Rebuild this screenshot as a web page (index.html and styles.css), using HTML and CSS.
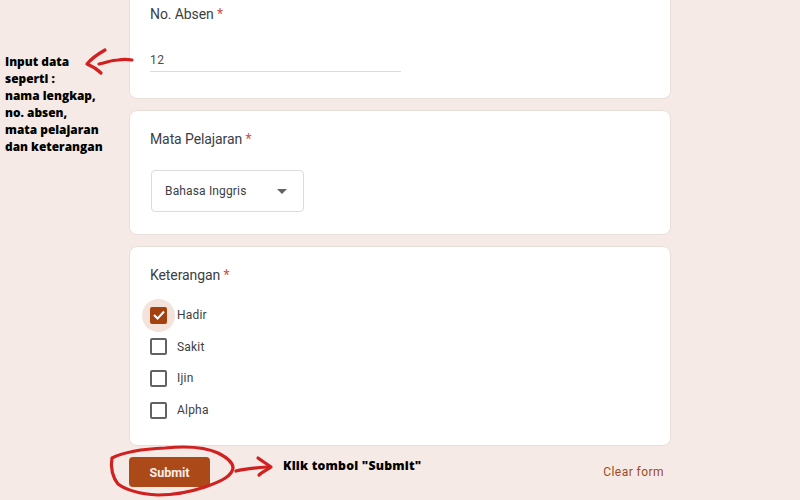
FILE: index.html
```html
<!DOCTYPE html>
<html lang="id">
<head>
<meta charset="utf-8">
<title>Form</title>
<link rel="stylesheet" href="styles.css">
</head>
<body>
<main class="form">
  <section class="card card-first">
    <div class="label">No. Absen <span class="req">*</span></div>
    <div class="answer">12</div>
  </section>
  <section class="card card-select">
    <div class="label">Mata Pelajaran <span class="req">*</span></div>
    <div class="select">
      <span>Bahasa Inggris</span>
      <span class="caret"></span>
    </div>
  </section>
  <section class="card card-check">
    <div class="label">Keterangan <span class="req">*</span></div>
    <div class="options">
      <div class="option">
        <span class="box checked">
          <svg viewBox="0 0 16 16" width="16" height="16"><path d="M3 8 6.6 11.6 13 4.5" fill="none" stroke="#fff" stroke-width="2.1"/></svg>
        </span>
        <span>Hadir</span>
      </div>
      <div class="option"><span class="box"></span><span>Sakit</span></div>
      <div class="option"><span class="box"></span><span>Ijin</span></div>
      <div class="option"><span class="box"></span><span>Alpha</span></div>
    </div>
  </section>
  <div class="actions">
    <button class="submit">Submit</button>
    <span class="clear">Clear form</span>
  </div>
</main>

<div class="note note-input">Input data<br>seperti :<br>nama lengkap,<br>no. absen,<br>mata pelajaran<br>dan keterangan</div>
<div class="note note-submit">Klik tombol "Submit"</div>

<svg class="ink" viewBox="0 0 800 500" width="800" height="500" fill="none" stroke="#d0201f" stroke-width="3.2" stroke-linecap="round" stroke-linejoin="round">
  <path d="M105 50 C98 54 91 59 87 64 C92 66 97 69 101 73"/>
  <path d="M99 64 C106 63 111 60 118 60 C123 59 127 59 132 60"/>
  <path d="M112 458 C122 453 140 449 165 448 C185 446 205 447 218 453 C228 458 233 463 233 468 C232 476 222 481 205 487 C190 492 175 495 158 495 C142 494 126 490 118 484 C113 478 110 468 112 458 Z"/>
  <path d="M236 471 C243 469 251 468 267 467"/>
  <path d="M258 458 C262 461 267 464 271 467 C267 470 262 472 259 475"/>
</svg>
</body>
</html>
```

FILE: styles.css
```css
* { box-sizing: border-box; }
html, body {
  margin: 0;
  height: 500px;
  overflow: hidden;
  background: #f6eae6;
}
body {
  position: relative;
  width: 800px;
  font-family: Roboto, "Liberation Sans", sans-serif;
  color: #202124;
}
.form {
  display: flex;
  flex-direction: column;
  gap: 11px;
  width: 542px;
  margin-left: 129px;
}
.card {
  background: #fff;
  border: 1px solid #e8dfdb;
  border-radius: 8px;
  padding: 0 20px;
}
.card-first {
  height: 99px;
  border-top: 0;
  border-radius: 0 0 8px 8px;
  padding-top: 6px;
}
.card-select {
  height: 125px;
  padding-top: 20px;
}
.card-check {
  position: relative;
  z-index: 0;
  height: 200px;
  padding-top: 20px;
}
.label {
  font-size: 14px;
  line-height: 17px;
  letter-spacing: -0.1px;
  color: #3c4043;
}
.req { color: #c9544a; }
.answer {
  width: 251px;
  margin-top: 23px;
  height: 26px;
  padding-top: 7px;
  font-size: 12px;
  line-height: 15px;
  letter-spacing: 0.4px;
  color: #4a4d50;
  border-bottom: 1px solid #dadce0;
}
.select {
  display: flex;
  align-items: center;
  justify-content: space-between;
  width: 153px;
  height: 42px;
  margin: 22px 0 0 1px;
  padding: 0 16px 0 13px;
  border: 1px solid #dadce0;
  border-radius: 4px;
  font-size: 12px;
  letter-spacing: 0.15px;
  color: #3c4043;
}
.caret {
  width: 0;
  height: 0;
  border-left: 5px solid transparent;
  border-right: 5px solid transparent;
  border-top: 5px solid #5f6368;
}
.options {
  display: flex;
  flex-direction: column;
  gap: 11.7px;
  margin-top: 21px;
}
.option {
  display: flex;
  align-items: center;
  gap: 10px;
  height: 20px;
  font-size: 12px;
  letter-spacing: 0.2px;
  color: #3c4043;
}
.box {
  position: relative;
  width: 17px;
  height: 17px;
  border: 2px solid #5f6368;
  border-radius: 2px;
}
.box.checked {
  display: flex;
  align-items: center;
  justify-content: center;
  background: #a5400f;
  border-color: #a5400f;
}
.box svg { flex: none; }
.box.checked::before {
  content: "";
  position: absolute;
  inset: -10px;
  z-index: -1;
  border-radius: 50%;
  background: #f4e3db;
}
.actions {
  display: flex;
  align-items: center;
  justify-content: space-between;
  height: 30px;
  padding-right: 7px;
}
.submit {
  width: 81px;
  height: 30px;
  border: 0;
  border-radius: 4px;
  background: #ab4a18;
  color: #fbeee8;
  font-family: Roboto, "Liberation Sans", sans-serif;
  font-size: 12.5px;
  font-weight: 700;
}
.clear {
  font-size: 12px;
  letter-spacing: 0.45px;
  color: #9c4a1e;
}
.note {
  position: absolute;
  font-family: "Open Sans", "DejaVu Sans", sans-serif;
  font-weight: 800;
  line-height: 17px;
  color: #000;
  white-space: nowrap;
}
.note-input { left: 5px; top: 53px; font-size: 11.9px; }
.note-submit { left: 283px; top: 457px; font-size: 12.3px; letter-spacing: 0.2px; }
.ink {
  position: absolute;
  left: 0;
  top: 0;
  pointer-events: none;
}
```
